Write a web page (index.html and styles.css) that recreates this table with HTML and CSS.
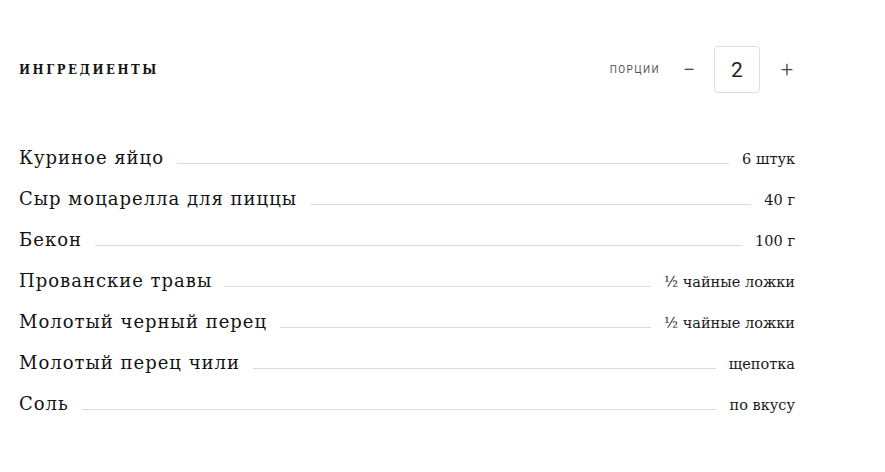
FILE: index.html
```html
<!DOCTYPE html>
<html lang="ru">
<head>
<meta charset="utf-8">
<link rel="stylesheet" href="styles.css">
</head>
<body>
<section class="ingredients">
  <div class="head">
    <h2 class="title">Ингредиенты</h2>
    <div class="servings">
      <span class="servings-label">Порции</span>
      <button class="btn minus">&minus;</button>
      <div class="count">2</div>
      <button class="btn plus">+</button>
    </div>
  </div>
  <ul class="list">
    <li class="row"><span class="name">Куриное яйцо</span><span class="dots"></span><span class="qty">6 штук</span></li>
    <li class="row"><span class="name">Сыр моцарелла для пиццы</span><span class="dots"></span><span class="qty">40 г</span></li>
    <li class="row"><span class="name">Бекон</span><span class="dots"></span><span class="qty">100 г</span></li>
    <li class="row"><span class="name">Прованские травы</span><span class="dots"></span><span class="qty">½ чайные ложки</span></li>
    <li class="row"><span class="name">Молотый черный перец</span><span class="dots"></span><span class="qty">½ чайные ложки</span></li>
    <li class="row"><span class="name">Молотый перец чили</span><span class="dots"></span><span class="qty">щепотка</span></li>
    <li class="row"><span class="name">Соль</span><span class="dots"></span><span class="qty">по вкусу</span></li>
  </ul>
</section>
</body>
</html>
```
FILE: styles.css
```css
html, body {
  margin: 0;
  padding: 0;
  background: #fff;
}
body {
  font-family: "DejaVu Serif", serif;
  color: #1a1a1a;
}
.ingredients {
  width: 776px;
  padding: 46px 0 0 19px;
}
.head {
  display: flex;
  align-items: center;
  justify-content: space-between;
  height: 47px;
}
.title {
  margin: 0;
  font-family: "DejaVu Serif", serif;
  font-size: 13px;
  font-weight: bold;
  text-transform: uppercase;
  letter-spacing: 2.8px;
  color: #141414;
  transform: scaleX(0.9);
  transform-origin: left center;
}
.servings {
  display: flex;
  align-items: center;
}
.servings-label {
  font-family: "Roboto", sans-serif;
  font-size: 10px;
  letter-spacing: 1.4px;
  text-transform: uppercase;
  color: #555;
  margin-right: 22px;
}
.btn {
  border: 0;
  background: none;
  padding: 0;
  font-family: "Roboto", sans-serif;
  font-size: 22px;
  font-weight: 300;
  line-height: 1;
  cursor: pointer;
}
.minus {
  color: #222;
  width: 14px;
  margin-right: 18px;
}
.plus {
  color: #3c4f3a;
  width: 16px;
  margin-left: 19px;
}
.count {
  width: 44px;
  height: 45px;
  border: 1px solid #dedede;
  border-radius: 4px;
  display: flex;
  align-items: center;
  justify-content: center;
  font-family: "Roboto", sans-serif;
  font-size: 21px;
  color: #222;
}
.list {
  list-style: none;
  margin: 54px 0 0;
  padding: 0;
}
.row {
  display: flex;
  align-items: baseline;
  height: 41px;
}
.name {
  font-size: 18px;
  letter-spacing: 1px;
  color: #141414;
}
.dots {
  flex: 1;
  height: 0;
  border-bottom: 1px solid #dcdcdc;
  margin: 0 13px 0 13px;
}
.qty {
  font-size: 14.5px;
  color: #1a1a1a;
}
```
